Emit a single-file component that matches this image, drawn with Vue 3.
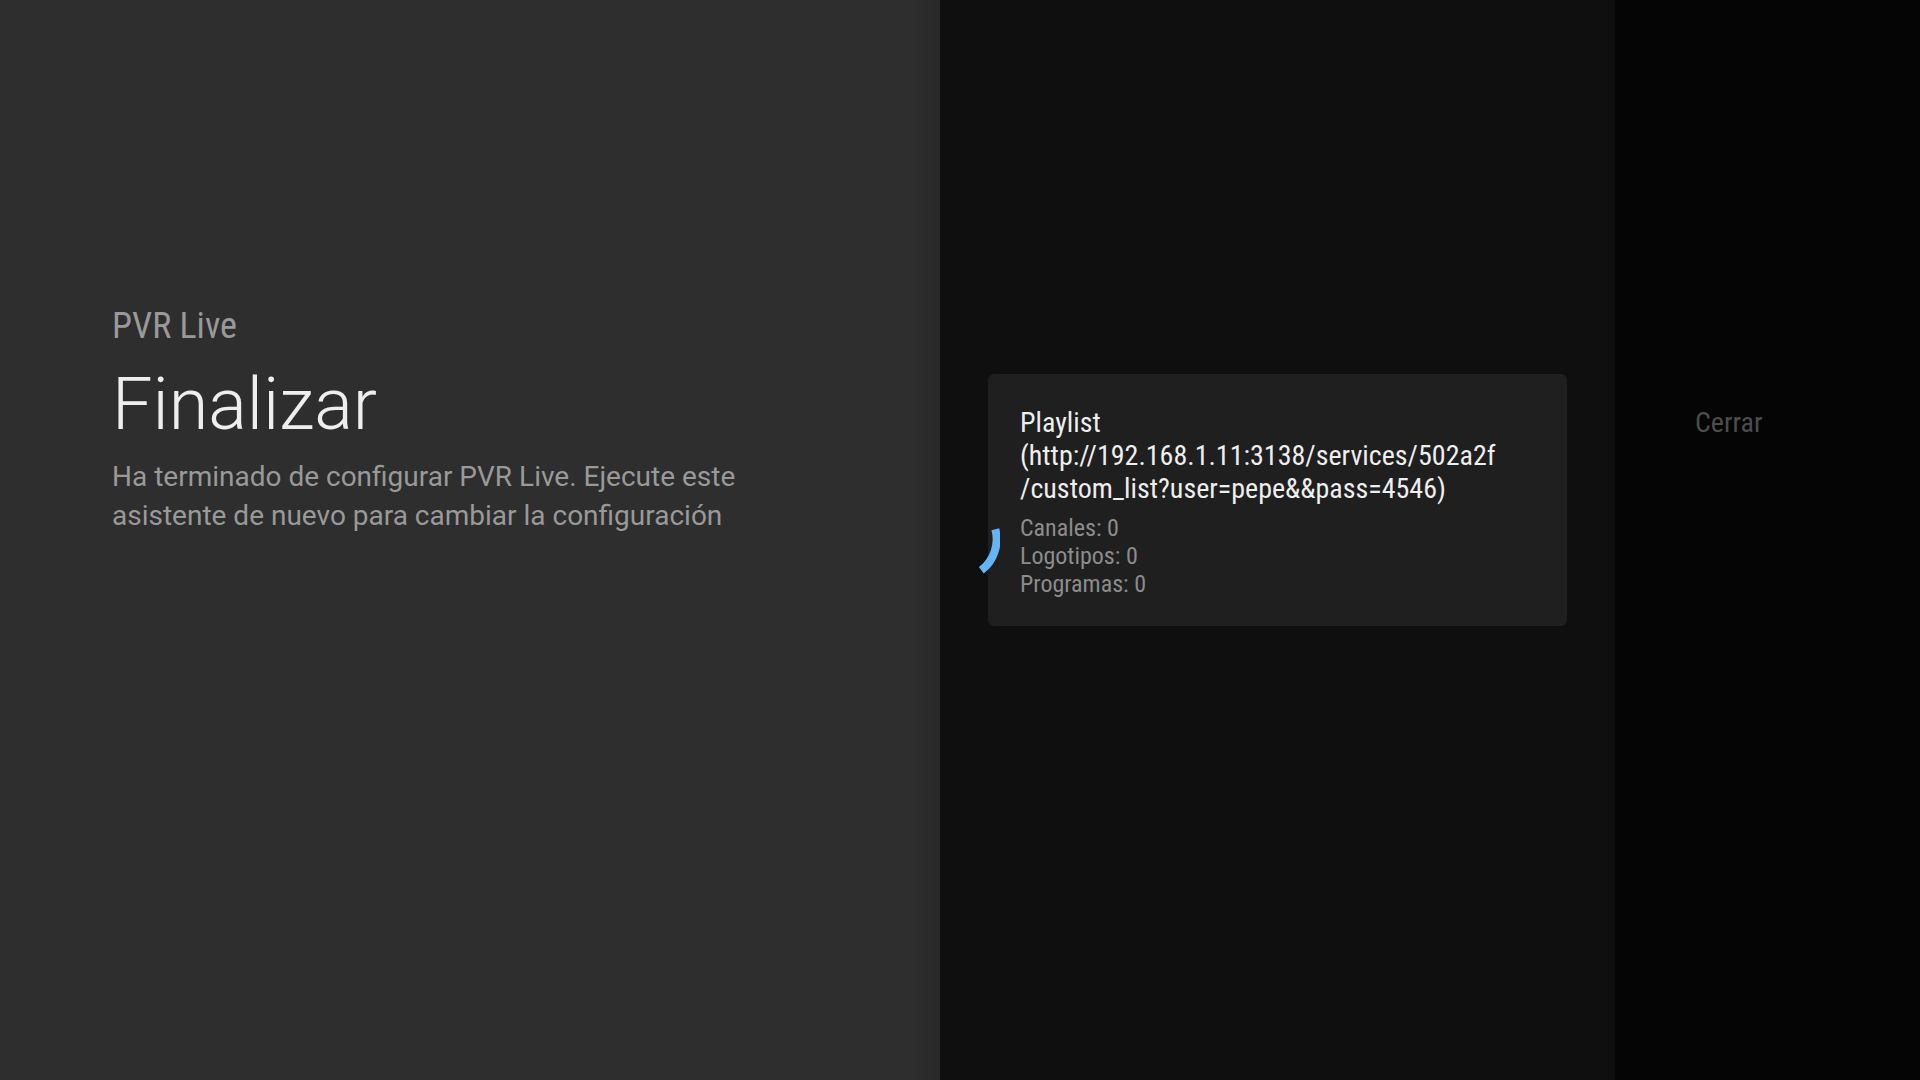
<script setup>
const app = 'PVR Live'
const details = [
  { label: 'Canales', value: 0 },
  { label: 'Logotipos', value: 0 },
  { label: 'Programas', value: 0 },
]
</script>

<template>
  <main class="wizard">
    <section class="guidance">
      <p class="breadcrumb">{{ app }}</p>
      <h1 class="title">Finalizar</h1>
      <p class="description">
        Ha terminado de configurar PVR Live. Ejecute este<br />asistente de nuevo para cambiar la configuración
      </p>
    </section>

    <section class="actions">
      <button class="card" type="button">
        <span class="name">Playlist<br />(http://192.168.1.11:3138/services/502a2f<br />/custom_list?user=pepe&amp;&amp;pass=4546)</span>
        <span v-for="item in details" :key="item.label" class="detail">{{ item.label }}: {{ item.value }}</span>
      </button>
      <svg class="spinner" viewBox="0 0 80 80" aria-hidden="true">
        <path d="M75.3 29.2A39 39 0 0 1 61.3 70.3" />
      </svg>
    </section>

    <aside class="side">
      <button class="close" type="button">Cerrar</button>
    </aside>
  </main>
</template>

<style>
body {
  margin: 0;
  background: #050505;
}
</style>

<style scoped>
.wizard {
  display: grid;
  grid-template-columns: 940fr 675fr 305fr;
  min-height: 100vh;
  font-family: "Roboto Condensed", Roboto, sans-serif;
}

.guidance {
  padding: 305px 112px 0;
  background: linear-gradient(to left, #292929, #2e2e2e 32px);
}

.breadcrumb {
  margin: 0;
  color: #999;
  font-size: 36px;
  line-height: 42px;
}

.title {
  margin: 16px 0 10px;
  color: #eee;
  font: 300 72px/84px Roboto, sans-serif;
}

.description {
  margin: 0;
  color: #999;
  font: 400 28px/39px Roboto, sans-serif;
  white-space: nowrap;
}

.actions {
  position: relative;
  padding: 374px 48px 0;
  background: #0f0f0f;
}

.card {
  display: flex;
  flex-direction: column;
  align-items: flex-start;
  width: 100%;
  padding: 32px 32px 28px;
  border: 0;
  border-radius: 6px;
  background: #1f1f1f;
  color: #8c8c8c;
  font-family: inherit;
  text-align: left;
  white-space: nowrap;
}

.name {
  margin-bottom: 9px;
  color: #eee;
  font-size: 28px;
  line-height: 33px;
}

.detail {
  font-size: 24px;
  line-height: 28px;
}

.spinner {
  position: absolute;
  top: 500px;
  left: -20px;
  width: 80px;
  height: 80px;
  fill: none;
  stroke: #64b5f6;
  stroke-width: 8;
}

.side {
  padding: 406px 80px 0;
  background: #050505;
}

.close {
  padding: 0;
  border: 0;
  background: none;
  color: #4d4d4d;
  font-family: inherit;
  font-size: 28px;
  line-height: 33px;
}
</style>
